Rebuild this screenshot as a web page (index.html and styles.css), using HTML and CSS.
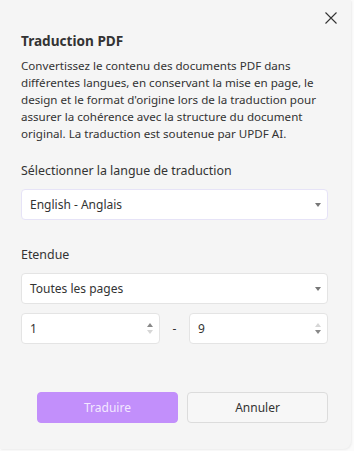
FILE: index.html
```html
<!DOCTYPE html>
<html lang="fr">
<head>
<meta charset="utf-8">
<link rel="stylesheet" href="styles.css">
</head>
<body>
<div class="dialog">
  <button class="close" aria-label="Fermer">
    <svg width="12" height="12" viewBox="0 0 12 12"><path d="M0.5 0.5 L11.5 11.5 M11.5 0.5 L0.5 11.5" stroke="#333" stroke-width="1.1" fill="none"/></svg>
  </button>
  <h1 class="title">Traduction PDF</h1>
  <p class="desc">Convertissez le contenu des documents PDF dans différentes langues, en conservant la mise en page, le design et le format d'origine lors de la traduction pour assurer la cohérence avec la structure du document original. La traduction est soutenue par UPDF AI.</p>

  <div class="label label-lang">Sélectionner la langue de traduction</div>
  <div class="select select-active">
    <span>English - Anglais</span>
    <span class="caret"></span>
  </div>

  <div class="label label-range">Etendue</div>
  <div class="select">
    <span>Toutes les pages</span>
    <span class="caret"></span>
  </div>

  <div class="range">
    <div class="num">
      <span>1</span>
      <span class="spin"><span class="up dark"></span><span class="down"></span></span>
    </div>
    <span class="dash">-</span>
    <div class="num">
      <span>9</span>
      <span class="spin"><span class="up"></span><span class="down dark"></span></span>
    </div>
  </div>

  <div class="actions">
    <button class="btn primary">Traduire</button>
    <button class="btn secondary">Annuler</button>
  </div>
</div>
</body>
</html>
```

FILE: styles.css
```css
* { box-sizing: border-box; }
html, body { margin: 0; padding: 0; }
body {
  background: #fbfbfb;
  width: 354px;
  height: 451px;
  overflow: hidden;
  font-family: "Noto Sans", "Open Sans", sans-serif;
  color: #333;
}
.dialog {
  position: relative;
  width: 351px;
  height: 449px;
  background: #f5f5f5;
  border-radius: 0 0 8px 0;
  box-shadow: 1px 1px 2px rgba(0,0,0,0.06);
  padding: 31px 23px 0 21px;
}
.close {
  position: absolute;
  right: 14px;
  top: 12px;
  width: 12px;
  height: 12px;
  padding: 0;
  border: none;
  background: none;
  display: block;
}
.close svg { display: block; }
.title {
  margin: 0;
  font-size: 13.6px;
  font-weight: 700;
  line-height: 20px;
  color: #333;
}
.desc {
  margin: 6px 0 0;
  font-size: 11.6px;
  line-height: 17px;
  color: #333;
  padding-right: 2px;
}
.label {
  font-size: 12.4px;
  line-height: 18px;
  color: #333;
}
.label-lang { margin-top: 20px; }
.label-range { margin-top: 26px; }
.select {
  margin-top: 9px;
  height: 31px;
  background: #fff;
  border: 1px solid #e4e4e4;
  border-radius: 4px;
  display: flex;
  align-items: center;
  justify-content: space-between;
  padding: 0 6px 0 8px;
  font-size: 12px;
}
.select-active { border-color: #e6e3f7; }
.caret {
  width: 0;
  height: 0;
  border-left: 3.5px solid transparent;
  border-right: 3.5px solid transparent;
  border-top: 4px solid #777;
}
.range {
  margin-top: 9px;
  display: flex;
  align-items: center;
}
.num {
  width: 139px;
  height: 31px;
  background: #fff;
  border: 1px solid #e4e4e4;
  border-radius: 4px;
  display: flex;
  align-items: center;
  justify-content: space-between;
  padding: 0 6px 0 8px;
  font-size: 12px;
}
.dash {
  width: 29px;
  text-align: center;
  font-size: 12px;
}
.spin {
  display: flex;
  flex-direction: column;
  gap: 3px;
}
.up, .down {
  width: 0;
  height: 0;
  border-left: 3.5px solid transparent;
  border-right: 3.5px solid transparent;
}
.up { border-bottom: 4px solid #d6d6d6; }
.down { border-top: 4px solid #d6d6d6; }
.up.dark { border-bottom-color: #888; }
.down.dark { border-top-color: #888; }
.actions {
  margin-top: 48px;
  display: flex;
  justify-content: flex-end;
  gap: 9px;
}
.btn {
  width: 141px;
  height: 31px;
  border-radius: 4px;
  font-family: inherit;
  font-size: 12px;
  padding: 0;
}
.primary {
  background: #c28ffb;
  border: 1px solid #c28ffb;
  color: #f3e8ff;
}
.secondary {
  background: #f7f7f7;
  border: 1px solid #dcdcdc;
  color: #333;
}
```
